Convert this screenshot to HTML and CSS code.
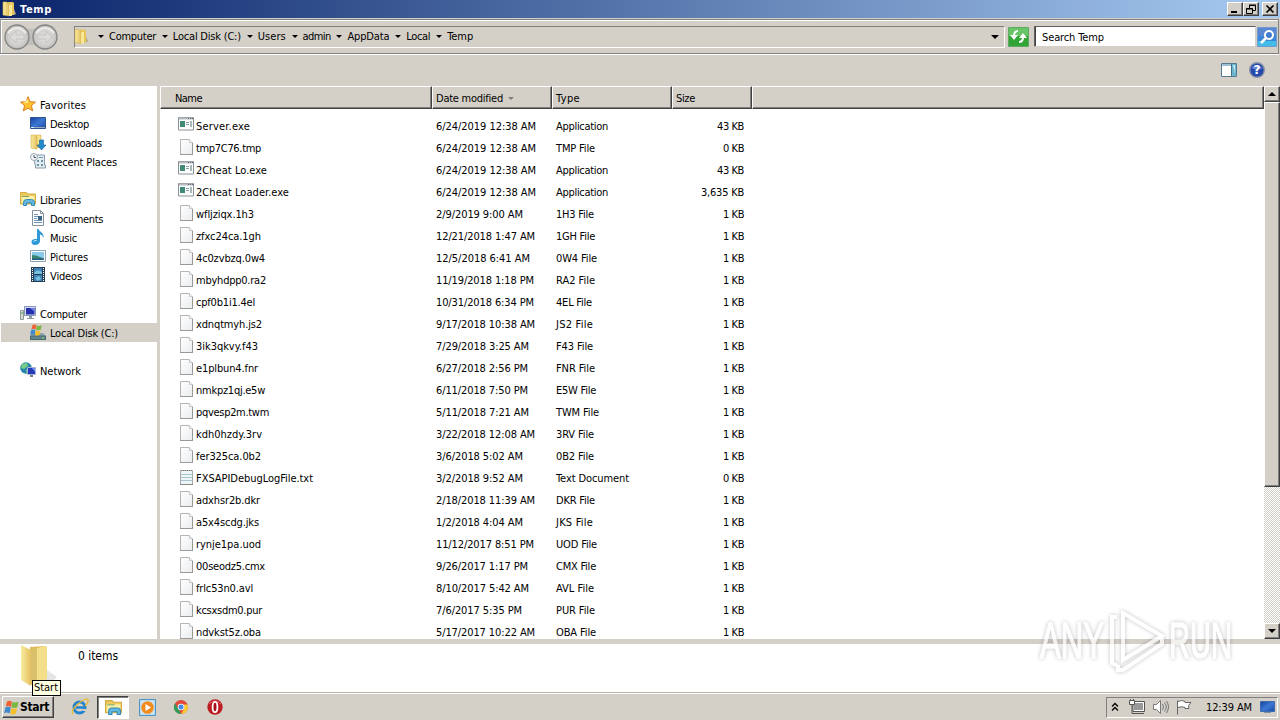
FILE: index.html
```html
<!DOCTYPE html>
<html lang="en">
<head>
<meta charset="utf-8">
<title>Temp</title>
<link rel="stylesheet" href="styles.css">
</head>
<body>
<svg class="defs" width="0" height="0">
  <defs>
    <linearGradient id="gold" x1="0" x2="1"><stop offset="0" stop-color="#f9ecA0"/><stop offset="1" stop-color="#e3c060"/></linearGradient>
    <linearGradient id="page" x1="0" y1="0" x2="1" y2="1"><stop offset="0" stop-color="#fff"/><stop offset="1" stop-color="#e9ecee"/></linearGradient>
    <linearGradient id="screen" x1="0" y1="0" x2="1" y2="1"><stop offset="0" stop-color="#173f9c"/><stop offset=".5" stop-color="#3c78d2"/><stop offset="1" stop-color="#1b4aa8"/></linearGradient>
    <radialGradient id="disc"><stop offset="0" stop-color="#e3e1de"/><stop offset=".7" stop-color="#d2d0ce"/><stop offset="1" stop-color="#bdbbb8"/></radialGradient>
  </defs>
  <symbol id="folder" viewBox="0 0 16 16"><path d="M7 1h5l1 1v12H7z" fill="#e5c65d"/><path d="M2 1h4l2 2v12l-6-1z" fill="url(#gold)" stroke="#d8b34c" stroke-width=".6"/><path d="M8 4l3-1v12H8z" fill="#f8e796"/><path d="M13 8l2 5-2 1z" fill="#b9a983"/></symbol>
  <symbol id="doc" viewBox="0 0 14 16"><path d="M.5.5h9l3 3v12H.5z" fill="url(#page)" stroke="#b4b4b4"/><path d="M9.500 .5v3h3" fill="#fff" stroke="#c8c8c8"/><path d="M0 15.500h13M12.500 4v12" stroke="#999"/></symbol>
  <symbol id="txt" viewBox="0 0 14 16"><path d="M.5 1.500h12v14H.5z" fill="#edf5f6" stroke="#aaa"/><path d="M1 5.500h11M1 8.500h11M1 11.500h11" stroke="#a5c6ca"/><path d="M1 1.500h11" stroke="#777" stroke-dasharray="1 1"/><path d="M0 15.500h13" stroke="#888"/></symbol>
  <symbol id="exe" viewBox="0 0 16 14"><path d="M.5.5h15v12.500H.5z" fill="#fff" stroke="#8a9097"/><path d="M1 1.500h14" stroke="#b8bcc2" stroke-width="2"/><path d="M10 1.500h5" stroke="#596273" stroke-dasharray="1 1"/><path d="M2 4h5v6H2z" fill="#3f8b78"/><path d="M8 5.500h3M8 7.500h3" stroke="#89a"/><path d="M13 4v6" stroke="#54786f"/></symbol>
  <symbol id="star" viewBox="0 0 16 16"><path d="M8 .7l2.100 5 5.400.4-4.100 3.500 1.300 5.300L8 12.100l-4.700 2.800 1.300-5.300L.5 6.100l5.400-.4z" fill="#ffc22e" stroke="#db7d1f"/><path d="M8 3v4L3 7" fill="#ffe58e"/></symbol>
  <symbol id="desktop" viewBox="0 0 16 16"><path d="M.5 2.500h15v11H.5z" fill="url(#screen)" stroke="#31528c"/><path d="M1 12.500h14" stroke="#9ab"/><path d="M1 12.500h3" stroke="#def"/></symbol>
  <symbol id="downloads" viewBox="0 0 16 16"><path d="M1 1h9v13H1z" fill="#e8c95f"/><path d="M6 1h5v10H6z" fill="#f6e28c" stroke="#d5ae49" stroke-width=".6"/><path d="M1 1h4l2 2v12l-6-1z" fill="url(#gold)" stroke="#d5ae49" stroke-width=".6"/><path d="M9.500 6h4v5H16l-4.500 5L7 11h2.500z" fill="#238bc9" stroke="#13629a" stroke-width=".6"/></symbol>
  <symbol id="recent" viewBox="0 0 16 16"><path d="M4 2h10.500v10h1v3h-10v-3H5z" fill="#e6edf1" stroke="#889bab"/><path d="M7 7h2v2H7zm4 0h2v2h-2zm-4 4h2v2H7zm4 0h2v2h-2zM9 4h4v1H9z" fill="#6c96ac"/><circle cx="4" cy="4" r="3.500" fill="#f4f6f7" stroke="#9ba8b1"/><path d="M4 2v2.500h2" fill="none" stroke="#456"/></symbol>
  <symbol id="library" viewBox="0 0 16 16"><path d="M.5 3V1.500h6L8 3h7.500v10H.5z" fill="#eecb5c" stroke="#d1aa43"/><path d="M1.500 5h13v7h-13z" fill="#fbf0a6"/><path d="M2 5.500h7" stroke="#72a66f"/><path d="M3.500 14.500v-3q0-3 3-3h5q3 0 3 3v3h-3v-2.500h-5v2.500z" fill="#64b7df" stroke="#328bb9"/></symbol>
  <symbol id="documents" viewBox="0 0 16 16"><path d="M2.500.5h8l3 3v12h-11z" fill="#fff" stroke="#83909d"/><path d="M10.500.5v3h3" fill="none" stroke="#83909d"/><path d="M4 4.500h4M4 6.500h4M4 8.500h3M4 10.500h8M4 12.500h8" stroke="#6f95b8"/><path d="M8 6h4v4H8z" fill="#386487"/></symbol>
  <symbol id="music" viewBox="0 0 16 16"><path d="M7 0h1.500c1 3 6 4 5 9-1-3-2.500-3.500-3.500-3.500v7q-1 3.500-5 3.500Q1.500 16 1.500 13 1.500 10 5.500 10H7z" fill="#2f98d6"/><path d="M3.500 12.500q1-1.500 3-1" stroke="#bdeaff" fill="none"/></symbol>
  <symbol id="pictures" viewBox="0 0 16 16"><path d="M.5 2.500h15v11H.5z" fill="#fff" stroke="#8da0ad"/><path d="M2 4h12v8H2z" fill="#88cae9"/><path d="M2 7q5 0 12 4v1H2z" fill="#37866f"/><path d="M2 10.500h12V12H2z" fill="#245c80"/></symbol>
  <symbol id="videos" viewBox="0 0 16 16"><path d="M1 0h14v15H1z" fill="#263f56"/><path d="M4 1h8v6H4zm0 7h8v6H4z" fill="#3f83b8"/><path d="M4 6q3-5 8-1v2H4zm1 5l4-2 2 3-3 2z" fill="#74bfdc"/><path d="M2.500 1v13M13.500 1v13" stroke="#fff" stroke-dasharray="1 1"/></symbol>
  <symbol id="computer" viewBox="0 0 16 16"><path d="M.5 5.500h3v9h-3z" fill="#d4d9d6" stroke="#8c9b91"/><path d="M1 8h2" stroke="#55a351"/><path d="M4.500 1.500h11v9h-11z" fill="#d9deef" stroke="#8794b9"/><path d="M6 3h8.500v6.500H6z" fill="#242fb0"/><path d="M10 3h4.500v4z" fill="#6b7de0"/><path d="M9 11h3v2h2v1H7v-1h2z" fill="#8c9aa8"/></symbol>
  <symbol id="flag" viewBox="0 0 16 14"><path d="M3 1q2.500-1.500 5 .3L7 6.500Q4.500 5 1.800 6z" fill="#ed6034"/><path d="M8.500 1.600q3 1 6-.3L13.300 6.800q-2.700 1-5.900.2z" fill="#78b843"/><path d="M1.500 6.700q2.700-1 5.300.4l-1.200 5.800Q3 11.500.2 12.500z" fill="#3f89d0"/><path d="M7.300 7.700q2.800 1 5.800-.2l-1.400 5.800q-2.700 1.200-5.600-.1z" fill="#f7bf2c"/></symbol>
  <symbol id="disk" viewBox="0 0 16 16"><path d="M2 9h11l3 3v3.500H0V12z" fill="#8aa4ad"/><path d="M.5 12h15v3.500H.5z" fill="#62868d" stroke="#48666f"/><path d="M12 14h2" stroke="#88f064"/><use href="#flag" x="0" y="0" width="13" height="12"/></symbol>
  <symbol id="network" viewBox="0 0 16 16"><circle cx="6" cy="6" r="5.800" fill="#2787aa"/><path d="M2 2l5-1 1 3-4 3-3-1zm4 6l4-2v4l-3 2z" fill="#77cb86"/><path d="M7.500 5.500h8v7h-8z" fill="#2439b8" stroke="#a6b3d6"/><path d="M12 6h3v4z" fill="#7190ef"/><path d="M10 13h3v2h-3z" fill="#6e7d91"/></symbol>
</svg>

<div class="titlebar">
  <svg class="title-icon" width="16" height="16"><use href="#folder"/></svg>
  <span class="title-text" data-w="32">Temp</span>
  <div class="winbtn"><svg width="14" height="12"><path d="M3 9h6" stroke="#000" stroke-width="2"/></svg></div>
  <div class="winbtn"><svg width="14" height="12" fill="none" stroke="#000"><path d="M5.500 5V2.500h6v5H9M5 2h7M2.500 5.500h6v5h-6zM2 6h7"/></svg></div>
  <div class="winbtn close"><svg width="14" height="12"><path d="M3.500 2.500l7 7m0-7l-7 7" stroke="#000" stroke-width="1.700"/></svg></div>
</div>

<div class="navbar">
  <svg class="history" width="56" height="30" viewBox="0 0 56 30"><path d="M14 5q14 4 28 0v20q-14-4-28 0z" fill="#c1bfbb"/><g fill="url(#disc)" stroke="#858585" stroke-width="1.300"><circle cx="14" cy="15" r="12"/><circle cx="42" cy="15" r="12"/></g><path d="M5 11q9-10 18 0m10 0q9-10 18 0" stroke="#eceae7" fill="none" stroke-width="2"/><g fill="#dedcda" stroke="#c6c4c1"><path d="M7 15l6-6v4h8v4h-8v4z"/><path d="M49 15l-6-6v4h-8v4h8v4z"/></g></svg>
  <div class="address">
    <svg class="addr-icon" width="16" height="17"><use href="#folder"/></svg>
    <i class="arrow"></i><span data-w="47">Computer</span><i class="arrow"></i><span data-w="68">Local Disk (C:)</span><i class="arrow"></i><span data-w="28">Users</span><i class="arrow"></i><span data-w="28">admin</span><i class="arrow"></i><span data-w="42">AppData</span><i class="arrow"></i><span data-w="24">Local</span><i class="arrow"></i><span data-w="26">Temp</span>
    <i class="arrow drop"></i>
  </div>
  <svg class="refresh" width="21" height="20"><path d="M.5.5h20v19H.5z" fill="#31a637" stroke="#63a765"/><path d="M1 1h19v8H1z" fill="#67c568"/><g fill="none" stroke="#fff" stroke-width="2"><path d="M10 4Q6 4 6 9M11 15q4 0 4-5"/></g><path d="M2 8h8l-4 5zm9 3l4-5 4 5z" fill="#fff"/></svg>
  <div class="search"><span data-w="62">Search Temp</span></div>
  <svg class="search-btn" width="20" height="20"><path d="M.5.5h19v19H.5z" fill="#3c86d9" stroke="#6f9bd0"/><path d="M1 1h18v8H1z" fill="#5a87d2"/><path d="M1 14h18v5H1z" fill="#43bce8"/><circle cx="12" cy="8" r="4" fill="#407dce" stroke="#fff" stroke-width="2"/><path d="M9 11l-5 5" stroke="#fff" stroke-width="2.500"/></svg>
</div>

<div class="toolbar">
  <svg width="16" height="14"><path d="M.5.5h15v13H.5z" fill="#fff" stroke="#557a94"/><path d="M1 2h9" stroke="#9fc0d4" stroke-width="2"/><path d="M10 1h5v12h-5z" fill="#6cb5d1"/><path d="M10.500 1v12" stroke="#426f8a"/><path d="M12 2h2v8z" fill="#c8eaf3"/></svg>
  <svg width="16" height="16"><circle cx="8" cy="8" r="7.300" fill="#2748ab" stroke="#8791a9" stroke-width="1.400"/><path d="M2.500 6q5-6 11 0-5 3-11 0" fill="#6586d8"/><text x="8" y="12.300" class="help">?</text></svg>
</div>

<div class="content">
  <div class="sidebar">
    <div class="node"><svg width="16" height="16"><use href="#star"/></svg><span data-w="46">Favorites</span></div>
    <div class="node child"><svg width="16" height="16"><use href="#desktop"/></svg><span data-w="39">Desktop</span></div>
    <div class="node child"><svg width="16" height="16"><use href="#downloads"/></svg><span data-w="52">Downloads</span></div>
    <div class="node child"><svg width="16" height="16"><use href="#recent"/></svg><span data-w="67">Recent Places</span></div>
    <div class="node group"><svg width="16" height="16"><use href="#library"/></svg><span data-w="41">Libraries</span></div>
    <div class="node child"><svg width="16" height="16"><use href="#documents"/></svg><span data-w="53">Documents</span></div>
    <div class="node child"><svg width="16" height="16"><use href="#music"/></svg><span data-w="27">Music</span></div>
    <div class="node child"><svg width="16" height="16"><use href="#pictures"/></svg><span data-w="38">Pictures</span></div>
    <div class="node child"><svg width="16" height="16"><use href="#videos"/></svg><span data-w="32">Videos</span></div>
    <div class="node group"><svg width="16" height="16"><use href="#computer"/></svg><span data-w="47">Computer</span></div>
    <div class="node child selected"><svg width="16" height="16"><use href="#disk"/></svg><span data-w="68">Local Disk (C:)</span></div>
    <div class="node group"><svg width="16" height="16"><use href="#network"/></svg><span data-w="41">Network</span></div>
  </div>
  <div class="list">
    <div class="columns">
      <div class="col name"><span data-w="27">Name</span></div>
      <div class="col date"><span data-w="67">Date modified</span><i class="sort"></i></div>
      <div class="col type"><span data-w="24">Type</span></div>
      <div class="col size"><span data-w="19">Size</span></div>
      <div class="col rest"></div>
    </div>
    <div class="rows" id="rows"></div>
  </div>
  <div class="scroll"><div class="sbtn"><i class="up"></i></div><div class="thumb"></div><div class="track"></div><div class="sbtn"><i class="down"></i></div></div>
</div>

<div class="details">
  <svg class="bigfolder" width="46" height="48" viewBox="0 0 46 48"><path d="M24 24l13 9-5 5H22z" fill="#aaa" opacity=".3"/><path d="M10 3l16-1v33l-12 5z" fill="#deb953"/><path d="M11 6l13-4 3 1v32l-14 6-2-1z" fill="#f3df8a"/><path d="M11 6l6-2v35l-6 2z" fill="#c9ab55" opacity=".6"/><path d="M1 1l10 5v36L1 36z" fill="url(#gold)"/></svg>
  <span class="count" data-w="40">0 items</span>
</div>

<div class="taskbar">
  <div class="start"><svg width="16" height="15"><use href="#flag"/></svg><b data-w="29">Start</b></div>
  <div class="quick"><svg width="18" height="18"><circle cx="8.500" cy="9.500" r="5.500" fill="none" stroke="#2384ce" stroke-width="3"/><path d="M5 9.500h9" stroke="#2384ce" stroke-width="2.500"/><path d="M11 11h6v2h-5z" fill="#d4d0c8"/><path d="M2 16Q-1 13 7 6t10-4q1 2-3 6" fill="none" stroke="#e9b92d" stroke-width="1.300"/></svg></div>
  <div class="quick active"><svg width="17" height="17"><use href="#library"/></svg></div>
  <div class="quick"><svg width="17" height="17"><path d="M.5.5h16v16H.5z" fill="#b9dbed" stroke="#4b95c6"/><path d="M2 2h13v13H2z" fill="#cfe3ee"/><circle cx="8.500" cy="8.500" r="6.300" fill="#f28b20"/><path d="M6.500 5l5.500 3.500L6.500 12z" fill="#fff"/></svg></div>
  <div class="quick"><svg width="14" height="14"><circle cx="7" cy="7" r="7" fill="#e0493c"/><path d="M.9 3.500L5 10l2 4A7 7 0 0 1 .9 3.500" fill="#2b9f59"/><path d="M7 14l3-5V4.500h3.500A7 7 0 0 1 7 14" fill="#f7cb38"/><circle cx="7" cy="7" r="3.300" fill="#fff"/><circle cx="7" cy="7" r="2.500" fill="#448be8"/></svg></div>
  <div class="quick"><svg width="16" height="16"><circle cx="8" cy="8" r="7.700" fill="#bd1b22"/><path d="M2 5q6-6 12 0" fill="none" stroke="#e66a6d"/><ellipse cx="8" cy="8" rx="2.400" ry="5.200" fill="#a70e16" stroke="#fff" stroke-width="1.800"/></svg></div>
  <div class="tray">
    <svg width="8" height="10" fill="none" stroke="#000" stroke-width="1.300"><path d="M1 4.500l3-3 3 3M1 8.500l3-3 3 3"/></svg>
    <svg class="t-net" width="16" height="16"><path d="M4.500 3.500h10v8h-10z" fill="#999" stroke="#fff"/><path d="M4 2.500h11.500v10H4zM7 14.500h8" fill="none" stroke="#555"/><path d="M.5 1.500h5v4h-5z" fill="#fff" stroke="#555"/><path d="M1.500 0v2M4.500 0v2M3 5v9.500h4" fill="none" stroke="#555"/></svg>
    <svg class="t-vol" width="17" height="16" fill="none" stroke="#777"><path d="M1.500 5.500h3l4-4v13l-4-4h-3z" fill="#fff"/><path d="M10.500 5q2 3 0 6M12.500 3.500q3.500 4.500 0 9M14.500 2q4 6 0 12"/></svg>
    <svg class="t-flag" width="16" height="16"><path d="M1.500 1.500v14M2 2.500q4-2 7 0v1h6l-2.500 3 .5 3H9v-1q-3-1.500-7 0" fill="#fff" stroke="#666"/></svg>
    <span data-w="46">12:39 AM</span>
    <svg class="t-desk" width="15" height="14"><path d="M.5 1.500h14v10H.5z" fill="url(#screen)" stroke="#3d6aae"/><path d="M4 12.500h7" stroke="#82909b"/></svg>
  </div>
</div>
<div class="tooltip"><span data-w="24">Start</span></div>
<svg class="watermark" width="216" height="84" viewBox="0 0 216 84">
  <text x="12" y="60" textLength="64" lengthAdjust="spacingAndGlyphs">ANY</text>
  <text x="141" y="60" textLength="63" lengthAdjust="spacingAndGlyphs">RUN</text>
  <path d="M95 15l39 23-39 24zM89 19h-5v46l6 3M90 67v5l5 0 39-26v-6"/>
</svg>
<script src="app.js"></script>
</body>
</html>
```

FILE: styles.css
```css
* { box-sizing: border-box; }
body { margin: 0; width: 1280px; height: 720px; overflow: hidden; display: flex; flex-direction: column; position: relative; background: #d4d0c8; color: #000; font: 11px/14px "DejaVu Sans Condensed", "DejaVu Sans", sans-serif; font-stretch: condensed; }
svg { display: block; flex: none; }
span, b { white-space: nowrap; }
.defs { position: absolute; }
.title-text, .node span, .col span, .row span, .tray span { padding-top: 2px; }

.titlebar { height: 18px; flex: none; display: flex; align-items: center; padding-right: 2px; background: linear-gradient(90deg, #0a246a, #a6caf0); color: #fff; font-weight: bold; }
.title-icon { margin: 0 1px 0 1px; }
.title-text { margin-right: auto; padding-left: 2px; }
.winbtn { width: 16px; height: 14px; background: #d4d0c8; border: 1px solid; border-color: #fff #404040 #404040 #fff; box-shadow: inset -1px -1px #808080; }
.close { margin-left: 3px; }

.navbar { height: 35px; flex: none; display: flex; align-items: center; margin-top: 1px; border: 1px solid; border-color: #808080 #808080 #808080 #999; box-shadow: inset 1px 1px #fff, 0 1px #fff; width: 1279px; }
.history { margin-left: 2px; }
.address { width: 931px; height: 22px; margin-left: 15px; border: 1px solid; border-color: #808080 #fff #fff #808080; display: flex; align-items: center; }
.addr-icon { margin: 0 3px 0 -2px; }
.arrow { width: 17px; height: 3px; flex: none; display: block; }
.arrow::before { content: ""; display: block; width: 0; margin-left: 6px; border: 3px solid transparent; border-top-color: #000; border-bottom: 0; }
.address span { margin-right: -.15px; }
.drop { margin-left: auto; margin-right: 2px; }
.drop::before { border-width: 4px 4px 0; }
.refresh { margin-left: 3px; }
.search { width: 222px; height: 21px; margin-left: 5px; padding: 4px 0 0 7px; background: #fff; border: 1px solid; border-color: #606060 #d4d0c8 #d4d0c8 #606060; box-shadow: inset 1px 0 #404040; }
.search-btn { margin-left: 1px; }

.toolbar { height: 32px; flex: none; display: flex; justify-content: flex-end; align-items: center; gap: 12px; padding: 0 15px 1px 0; }
.help { font: bold 12px "DejaVu Sans", sans-serif; fill: #fff; text-anchor: middle; }

.content { height: 553px; flex: none; display: flex; }
.sidebar { width: 160px; flex: none; background: #fff; border-right: 3px solid #d4d0c8; padding-top: 9px; }
.node { height: 19px; display: flex; align-items: center; gap: 4px; padding-left: 20px; margin-left: 1px; }
.node svg { margin: -1px 0 0 -1px; }
.child { padding-left: 30px; }
.group { margin-top: 19px; }
.selected { background: #d4d0c8; }

.list { flex: 1; background: #fff; overflow: hidden; display: flex; flex-direction: column; }
.columns { display: flex; height: 23px; flex: none; }
.col { display: flex; align-items: center; background: #d4d0c8; border: 1px solid; border-color: #fff #404040 #404040 #fff; box-shadow: inset -1px -1px #808080; padding-left: 3px; padding-top: 1px; }
.col.name { width: 272px; padding-left: 14px; }
.col.date, .col.type { width: 120px; }
.col.size { width: 80px; }
.col.rest { flex: 1; }
.sort { margin: 1px 0 0 5px; border: 3px solid transparent; border-top-color: #808080; border-bottom: 0; }
.rows { padding-top: 6px; }
.row { height: 22px; display: flex; align-items: center; }
.cell { flex: none; display: flex; align-items: center; }
.c-name { width: 276px; padding-left: 18px; }
.c-icon { width: 18px; height: 16px; display: flex; flex: none; margin-top: -2px; }
.c-icon svg[width="14"] { margin-left: 2px; }
.c-date { width: 120px; }
.c-type { width: 120px; }
.c-size { width: 68px; justify-content: flex-end; }

.scroll { width: 16px; flex: none; display: flex; flex-direction: column; }
.sbtn { width: 16px; height: 16px; display: flex; align-items: center; justify-content: center; }
.sbtn, .thumb { flex: none; background: #d4d0c8; border: 1px solid; border-color: #fff #404040 #404040 #fff; box-shadow: inset -1px -1px #808080; }
.thumb { height: 385px; }
.track { flex: 1; background: repeating-conic-gradient(#fff 0 25%, #d4d0c8 0 50%) 0 0 / 2px 2px; }
.up, .down { border: 4px solid transparent; }
.up { border-bottom-color: #000; border-top: 0; }
.down { border-top-color: #000; border-bottom: 0; }

.details { height: 53px; flex: none; display: flex; background: #fff; border-top: 5px solid #d4d0c8; }
.bigfolder { margin-left: 20px; }
.count { margin: 5px 0 0 12px; font-size: 12px; }

.taskbar { flex: 1; display: flex; align-items: center; border-top: 1px solid #b8b4ac; box-shadow: inset 0 1px #fff; padding: 1px 2px 0; }
.start { width: 52px; height: 22px; display: flex; align-items: center; gap: 0; padding-left: 1px; font-size: 12px; border: 1px solid; border-color: #fff #404040 #404040 #fff; box-shadow: inset -1px -1px #808080; }
.quick { width: 32px; height: 23px; display: flex; align-items: center; justify-content: center; margin-right: 2px; }
.start + .quick { margin: 0 1px 0 10px; }
.active { background: #fff; border: 1px solid; border-color: #404040 #fff #fff #404040; box-shadow: inset 1px 1px #808080; }
.tray { width: 172px; height: 21px; margin-left: auto; display: flex; align-items: center; padding-left: 4px; border: 1px solid; border-color: #808080 #fff #fff #808080; }
.t-net { margin-left: 10px; }
.t-vol { margin-left: 7px; }
.t-flag { margin: 0 14px 0 7px; }
.t-desk { margin-left: 8px; }

.tooltip { position: absolute; left: 32px; top: 680px; width: 29px; height: 16px; padding-left: 1px; border: 1px solid #000; background: #ffffe1; }
.watermark { position: absolute; left: 1028px; top: 598px; overflow: visible; filter: drop-shadow(0 0 2px rgba(0,0,0,.35)); opacity: .7; }
.watermark text { font: 50px "Liberation Sans", sans-serif; fill: #fff; stroke: #fff; stroke-width: 1.5; }
.watermark path { fill: none; stroke: #fff; stroke-width: 4; }
```

FILE: app.js
```js
// name, width, date, width, type, width, size, width
const files = [
  ["Server.exe", 54, "6/24/2019 12:38 AM", 100, "Application", 52, "43 KB", 27],
  ["tmp7C76.tmp", 65, "6/24/2019 12:38 AM", 100, "TMP File", 39, "0 KB", 21],
  ["2Cheat Lo.exe", 71, "6/24/2019 12:38 AM", 100, "Application", 52, "43 KB", 27],
  ["2Cheat Loader.exe", 93, "6/24/2019 12:38 AM", 100, "Application", 52, "3,635 KB", 43],
  ["wfljziqx.1h3", 58, "2/9/2019 9:00 AM", 87, "1H3 File", 38, "1 KB", 21],
  ["zfxc24ca.1gh", 65, "12/21/2018 1:47 AM", 99, "1GH File", 39, "1 KB", 21],
  ["4c0zvbzq.0w4", 69, "12/5/2018 6:41 AM", 94, "0W4 File", 41, "1 KB", 21],
  ["mbyhdpp0.ra2", 70, "11/19/2018 1:18 PM", 98, "RA2 File", 39, "1 KB", 21],
  ["cpf0b1i1.4el", 59, "10/31/2018 6:34 PM", 98, "4EL File", 36, "1 KB", 21],
  ["xdnqtmyh.js2", 66, "9/17/2018 10:38 AM", 99, "JS2 File", 37, "1 KB", 21],
  ["3ik3qkvy.f43", 62, "7/29/2018 3:25 AM", 93, "F43 File", 37, "1 KB", 21],
  ["e1plbun4.fnr", 62, "6/27/2018 2:56 PM", 92, "FNR File", 39, "1 KB", 21],
  ["nmkpz1qj.e5w", 69, "6/11/2018 7:50 PM", 92, "E5W File", 40, "1 KB", 21],
  ["pqvesp2m.twm", 73, "5/11/2018 7:21 AM", 93, "TWM File", 43, "1 KB", 21],
  ["kdh0hzdy.3rv", 66, "3/22/2018 12:08 AM", 99, "3RV File", 38, "1 KB", 21],
  ["fer325ca.0b2", 65, "3/6/2018 5:02 AM", 87, "0B2 File", 38, "1 KB", 21],
  ["FXSAPIDebugLogFile.txt", 117, "3/2/2018 9:52 AM", 87, "Text Document", 73, "0 KB", 21],
  ["adxhsr2b.dkr", 64, "2/18/2018 11:39 AM", 99, "DKR File", 39, "1 KB", 21],
  ["a5x4scdg.jks", 63, "1/2/2018 4:04 AM", 87, "JKS File", 37, "1 KB", 21],
  ["rynje1pa.uod", 65, "11/12/2017 8:51 PM", 98, "UOD File", 41, "1 KB", 21],
  ["00seodz5.cmx", 69, "9/26/2017 1:17 PM", 92, "CMX File", 40, "1 KB", 21],
  ["frlc53n0.avl", 57, "8/10/2017 5:42 AM", 93, "AVL File", 38, "1 KB", 21],
  ["kcsxsdm0.pur", 66, "7/6/2017 5:35 PM", 86, "PUR File", 39, "1 KB", 21],
  ["ndvkst5z.oba", 65, "5/17/2017 10:22 AM", 99, "OBA File", 40, "1 KB", 21]
];

const icon = name => name.endsWith(".exe")
  ? '<svg width="16" height="14"><use href="#exe"/></svg>'
  : `<svg width="14" height="16"><use href="#${name.endsWith(".txt") ? "txt" : "doc"}"/></svg>`;

document.getElementById("rows").innerHTML = files.map(f => `<div class="row">
  <div class="cell c-name"><div class="c-icon">${icon(f[0])}</div><span data-w="${f[1]}">${f[0]}</span></div>
  <div class="cell c-date"><span data-w="${f[3]}">${f[2]}</span></div>
  <div class="cell c-type"><span data-w="${f[5]}">${f[4]}</span></div>
  <div class="cell c-size"><span data-w="${f[7]}">${f[6]}</span></div>
</div>`).join("");

// Tracks each label so that it takes up its nominal width.
document.querySelectorAll("[data-w]").forEach(el => {
  const range = document.createRange();
  range.selectNodeContents(el);
  const natural = range.getBoundingClientRect().width;
  el.style.letterSpacing = (el.dataset.w - natural) / el.textContent.length + "px";
});
```
